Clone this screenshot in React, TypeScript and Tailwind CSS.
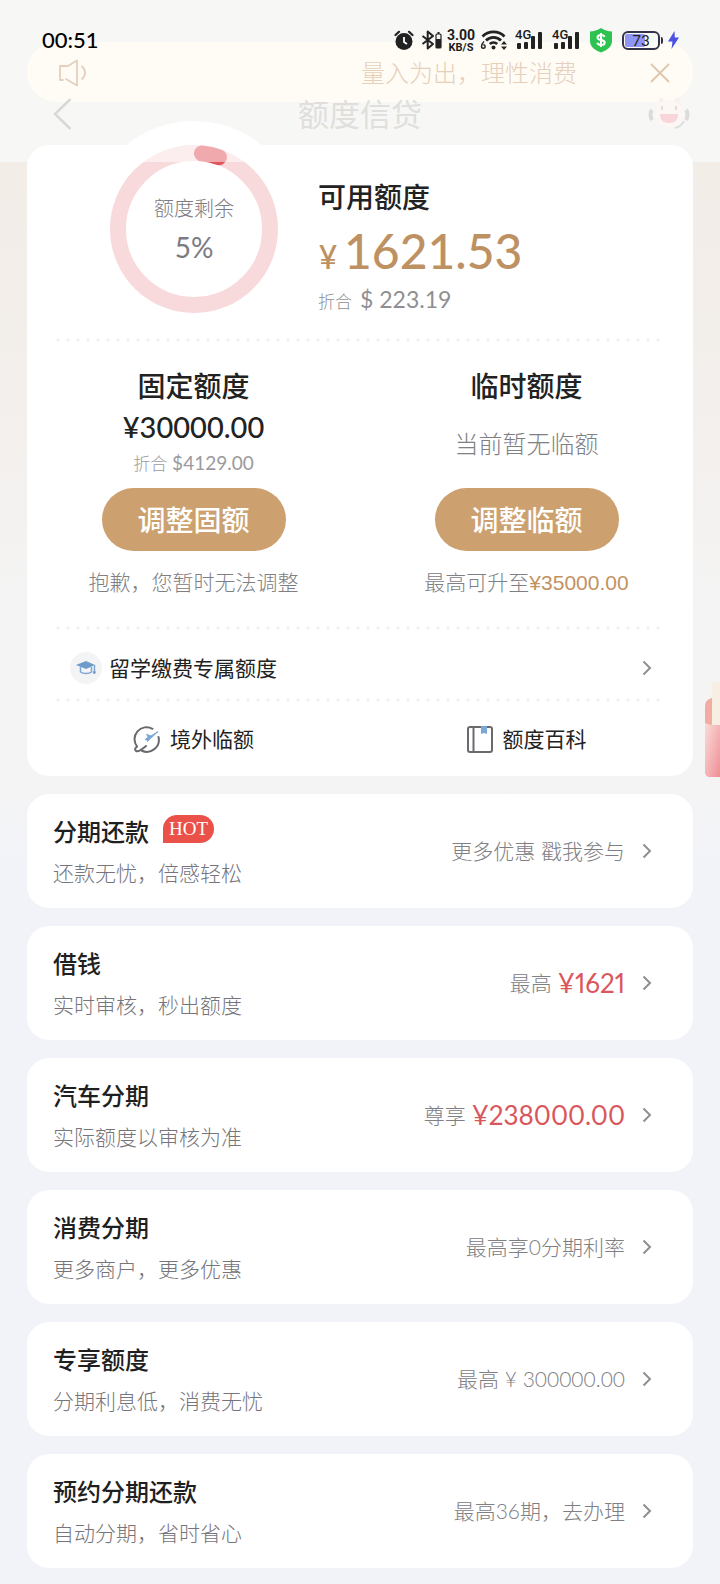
import type { ReactNode } from "react";

type Offer = {
  title: string;
  desc: string;
  note: string;
  amount?: string;
  hot?: boolean;
};

const offers: Offer[] = [
  { title: "分期还款", desc: "还款无忧，倍感轻松", note: "更多优惠 戳我参与", hot: true },
  { title: "借钱", desc: "实时审核，秒出额度", note: "最高", amount: "¥1621" },
  { title: "汽车分期", desc: "实际额度以审核为准", note: "尊享", amount: "¥238000.00" },
  { title: "消费分期", desc: "更多商户，更多优惠", note: "最高享0分期利率" },
  { title: "专享额度", desc: "分期利息低，消费无忧", note: "最高 ¥ 300000.00" },
  { title: "预约分期还款", desc: "自动分期，省时省心", note: "最高36期，去办理" },
];

function Chevron() {
  return (
    <svg width="10" height="16" viewBox="0 0 10 16" fill="none" stroke="#8f8f93" strokeWidth="2">
      <path d="M1.500 1.500 8 8l-6.500 6.500" />
    </svg>
  );
}

function Divider() {
  return (
    <div className="mx-[26px] h-1 bg-[radial-gradient(circle,#eff0f2_1px,transparent_2px)] bg-[length:10px_4px]" />
  );
}

function Signal() {
  return (
    <div className="relative h-5 w-7">
      <span className="absolute left-0 -top-0.5 font-['Roboto',sans-serif] text-[13px] leading-[13px] font-medium">4G</span>
      <svg className="h-5 w-7" viewBox="0 0 28 20" fill="#222">
        <rect x="2" y="13" width="4" height="6" rx="1" />
        <rect x="9" y="12" width="4" height="7" rx="1" />
        <rect x="16" y="6" width="4" height="13" rx="1" />
        <rect x="23" y="2" width="4" height="17" rx="1" />
      </svg>
    </div>
  );
}

function StatusBar() {
  return (
    <div className="absolute inset-x-0 top-[26px] flex h-7 items-center pl-[42px] pr-10 text-[#1c1c1c]">
      <span className="text-[22px] leading-7 font-medium text-black">00:51</span>
      <div className="ml-auto flex items-center">
        <svg width="20" height="20" viewBox="0 0 20 20" fill="none">
          <circle cx="10" cy="11.500" r="8.500" fill="#222" />
          <path d="M10 7v5l3 2" stroke="#fff" strokeWidth="1.800" />
          <path d="M1.500 5 5 1.800M18.500 5 15 1.800" stroke="#222" strokeWidth="2.200" strokeLinecap="round" />
        </svg>
        <svg className="ml-[7px]" width="21" height="20" viewBox="0 0 21 20" fill="none">
          <path d="M1.500 6 12 14l-5.300 4.500v-17L12 6 1.500 14" stroke="#222" strokeWidth="2" strokeLinejoin="round" />
          <rect x="15" y="4" width="5" height="14" rx="1" stroke="#222" strokeWidth="1.200" />
          <path d="M15 9h5v9h-5zM16.500 2h2v2h-2z" fill="#222" />
        </svg>
        <div className="ml-1 w-[30px] text-center font-['Roboto',sans-serif] font-bold">
          <div className="text-[14px] leading-[14px]">3.00</div>
          <div className="text-[11px] leading-[11px]">KB/S</div>
        </div>
        <svg className="ml-1" width="28" height="22" viewBox="0 0 28 22" fill="none">
          <path d="M2.500 7.500a15.500 15.500 0 0 1 22 0M6 11.500a10.500 10.500 0 0 1 15 0M9.800 15a5.500 5.500 0 0 1 7.400 0" stroke="#222" strokeWidth="2.800" />
          <circle cx="13.500" cy="18.500" r="2" fill="#222" />
          <path d="M21 15.500 24 12l3 3.500zM21 17.500l3 3.500 3-3.500z" fill="#222" />
          <path d="M4 12.500c-2 2-2.500 3.500-2.500 5a1.800 1.800 0 1 0 1.800-1.800" stroke="#222" strokeWidth="1.400" />
        </svg>
        <div className="ml-[7px]">
          <Signal />
        </div>
        <div className="ml-[9px]">
          <Signal />
        </div>
        <svg className="ml-[9px]" width="24" height="26" viewBox="0 0 24 26" fill="none">
          <path d="M12 1c3.500 2.300 7 3.300 11 3.500v9.500c0 5.500-4.500 9.300-11 11.500C5.500 23.300 1 19.500 1 14V4.500C5 4.300 8.500 3.300 12 1z" fill="#2ec351" />
          <path d="M15.500 10c-.5-1.500-1.800-2-3.500-2-2 0-3.500.8-3.500 2.500 0 3.500 7.200 1.700 7.200 5 0 1.700-1.700 2.500-3.700 2.500-1.900 0-3.300-.7-3.700-2.200M12 6v14" stroke="#fff" strokeWidth="2" />
        </svg>
        <div className="relative ml-[9px] h-[19px] w-[38px] rounded-[6px] border-2 border-[#33334a] p-px">
          <div className="h-full w-5 rounded-[2px] bg-[#8f95f5]" />
          <span className="absolute inset-0 text-center text-[15px] leading-[15px] text-[#222]">73</span>
        </div>
        <div className="ml-px h-[7px] w-[2px] rounded-r bg-[#33334a]" />
        <svg className="ml-1" width="13" height="20" viewBox="0 0 13 20">
          <path d="M7.500 1 1 11.500h4.500L4.500 19 12 7.500H7.800z" fill="#4b50e6" />
        </svg>
      </div>
    </div>
  );
}

function Header() {
  return (
    <header className="relative z-20 h-[145px] pt-[42px]">
      <div className="mx-[27px] flex h-[60px] items-center rounded-full bg-[#fffcf5] pt-0.5 pl-[31px] pr-[18px] text-[#e6d0bb]">
        <svg width="30" height="28" viewBox="0 0 30 28" fill="none" stroke="currentColor" strokeWidth="1.800" strokeLinejoin="round" strokeLinecap="round">
          <path d="M5 21H2V7h8l9-5.500v25L8 20" />
          <path d="M24 7.500c4 3.500 4 9 0 12.500" />
        </svg>
        <p className="ml-auto text-2xl leading-8 font-light whitespace-nowrap">量入为出，理性消费</p>
        <button aria-label="关闭" className="ml-[68px] p-1">
          <svg width="22" height="22" viewBox="0 0 22 22" stroke="#e0c7af" strokeWidth="2">
            <path d="m2 2 18 18M20 2 2 20" />
          </svg>
        </button>
      </div>
      <nav className="flex items-start justify-between pl-[53px] pr-[30px] text-[#e0dfdd]">
        <button aria-label="返回" className="-mt-1">
          <svg width="19" height="32" viewBox="0 0 19 32" fill="none" stroke="#d9d8d6" strokeWidth="2.500">
            <path d="M17.500 1 2 16l15.500 15" />
          </svg>
        </button>
        <h1 className="text-[31px] leading-6">额度信贷</h1>
        <button aria-label="客服" className="-mt-1.5">
          <svg width="42" height="34" viewBox="0 0 42 34" fill="none">
            <path d="M10 9 12 1l6 4h7l5-4 3 8" fill="#fbeeed" />
            <ellipse cx="21" cy="18" rx="15" ry="14" fill="#fcf6f5" />
            <path d="M4 14c-2 2-2 7 0 10" stroke="#dadcdc" strokeWidth="4" />
            <path d="M38 14c2 2 2 7 0 10" stroke="#dadcdc" strokeWidth="4" />
            <path d="M36 25c-2 4-5 6-9 7" stroke="#dedede" strokeWidth="2" />
            <path d="M12 18h18c0 6-3 9-9 9s-9-3-9-9z" fill="#f7d5d8" />
            <path d="M14 10v4M28 10v4" stroke="#ead9d9" strokeWidth="2" />
          </svg>
        </button>
      </nav>
      <StatusBar />
    </header>
  );
}

function QuotaRing() {
  return (
    <div className="relative h-[168px] w-[168px] shrink-0">
      <div className="absolute -inset-6 rounded-full bg-white" />
      <svg className="absolute inset-0" width="168" height="168" viewBox="0 0 168 168" fill="none" strokeWidth="16">
        <circle cx="84" cy="84" r="76" stroke="#f9dadc" />
        <path d="M92 8.400A76 76 0 0 1 109 12.200" stroke="#e0555a" strokeLinecap="round" />
      </svg>
      <div className="relative flex flex-col items-center pt-[47px] text-[#7b7b82]">
        <span className="text-xl leading-8 font-light">额度剩余</span>
        <span className="text-[28px] leading-[46px]">5%</span>
      </div>
    </div>
  );
}

function QuotaColumn({ title, action, children, hint }: { title: string; action: string; children: ReactNode; hint: ReactNode }) {
  return (
    <div className="flex flex-col items-center">
      <h2 className="text-[28px] leading-10 font-medium">{title}</h2>
      <div className="flex h-[82px] flex-col items-center">{children}</div>
      <button className="h-[63px] w-[184px] rounded-full bg-[#cca16f] text-[28px] leading-10 font-medium text-white">
        {action}
      </button>
      <p className="mt-4 text-[21px] leading-[30px] font-light text-[#808084]">{hint}</p>
    </div>
  );
}

function QuotaCard() {
  return (
    <section className="mx-[27px] rounded-[22px] bg-white text-[#222]">
      <div className="flex h-[193px] pl-[83px]">
        <QuotaRing />
        <div className="relative pl-10 pt-8">
          <h2 className="text-[28px] leading-10 font-medium">可用额度</h2>
          <p className="mt-1 flex items-baseline gap-1.5 font-medium text-[#be9163]">
            <span className="w-5 text-center text-[32px]">¥</span>
            <span className="text-5xl leading-[60px]">1621.53</span>
          </p>
          <p className="flex items-baseline gap-2 text-[#8f8f93]">
            <span className="text-[17px] font-light">折合</span>
            <span className="text-[23px] leading-9">$ 223.19</span>
          </p>
        </div>
      </div>
      <Divider />
      <div className="grid grid-cols-2 pt-6 pb-7">
        <QuotaColumn title="固定额度" action="调整固额" hint="抱歉，您暂时无法调整">
          <p className="text-[29px] leading-[42px] font-medium">¥30000.00</p>
          <p className="text-[19px] leading-[30px] text-[#9a9a9e]">
            <span className="text-[17px] font-light">折合</span> $4129.00
          </p>
        </QuotaColumn>
        <QuotaColumn
          title="临时额度"
          action="调整临额"
          hint={
            <>
              最高可升至
              <span className="font-['Liberation_Sans',Arial,sans-serif] text-[#c4925f]">¥35000.00</span>
            </>
          }
        >
          <p className="pt-5 text-2xl leading-9 font-light text-[#808084]">当前暂无临额</p>
        </QuotaColumn>
      </div>
      <Divider />
      <button className="flex h-[68px] w-full items-center pt-2 pl-[43px] pr-[41px]">
        <span className="flex h-8 w-8 items-center justify-center rounded-full bg-[#f3f4f6]">
          <svg width="20" height="14" viewBox="0 0 20 14" fill="none">
            <path d="M10 0 0 4l10 4 9-4z" fill="#6f9bcc" />
            <path d="M4.500 6v5c2.500 2 8.500 2 11 0V6M18.500 4v7" stroke="#7fa6d3" strokeWidth="1.500" />
            <circle cx="18.300" cy="11.500" r="1.400" fill="#6f9bcc" />
          </svg>
        </span>
        <span className="ml-[7px] mr-auto text-[21px] leading-[30px]">留学缴费专属额度</span>
        <Chevron />
      </button>
      <Divider />
      <div className="grid h-[74px] grid-cols-2">
        <button className="flex items-center justify-center gap-2.5">
          <svg width="27" height="27" viewBox="0 0 27 27" fill="none" strokeLinecap="round">
            <path d="M19.500 2.800A12 12 0 0 0 4 20.500M25.500 11a12 12 0 0 1-17 13.500" stroke="#6a6a6e" strokeWidth="2" />
            <path d="M4 20.500c-2 1.500-2.500 3.500-1 4.500 2 1 6-1.500 10-5" stroke="#6a6a6e" strokeWidth="2" />
            <path d="m14 8.500 4 1.500 7-4.500-7.500 7-3 3-.5-2h-2l3-2z" fill="#7ba7d6" stroke="#7ba7d6" />
          </svg>
          <span className="text-[21px] leading-[30px]">境外临额</span>
        </button>
        <button className="flex items-center justify-center gap-2.5">
          <svg width="26" height="27" viewBox="0 0 26 27" fill="none">
            <rect x="1" y="1" width="24" height="25" rx="2" stroke="#6a6a6e" strokeWidth="2" />
            <path d="M6.500 1v25" stroke="#6a6a6e" strokeWidth="2" />
            <path d="M14 0h6v8l-3-1-3 1z" fill="#7ba7d6" />
          </svg>
          <span className="text-[21px] leading-[30px]">额度百科</span>
        </button>
      </div>
    </section>
  );
}

function OfferCard({ offer }: { offer: Offer }) {
  return (
    <button className="flex h-[114px] w-full items-center rounded-[22px] bg-white pl-[26px] pr-[41px] text-left">
      <span className="block pt-1">
        <span className="flex items-center text-2xl leading-10 font-medium text-[#1f1f1f]">
          {offer.title}
          {offer.hot && (
            <span className="mb-1.5 ml-3.5 flex h-7 w-[51px] items-center justify-center rounded-[14px] rounded-bl-none bg-[#ea5149] font-['Liberation_Serif',serif] text-[19px] text-white">
              HOT
            </span>
          )}
        </span>
        <span className="block text-[21px] leading-[42px] font-light text-[#75757b]">{offer.desc}</span>
      </span>
      <span className="ml-auto mr-[17px] flex items-center gap-1.5 text-[21px] leading-8 font-light text-[#808084]">
        {offer.note}
        {offer.amount && (
          <span className="text-[26px] font-normal text-[#d9575c] proportional-nums">{offer.amount}</span>
        )}
      </span>
      <Chevron />
    </button>
  );
}

export default function App() {
  return (
    <div className="relative min-h-screen overflow-hidden bg-[#f2f3f8] bg-[linear-gradient(#efeeea_0px,#efeeea_162px,#f2ede7_162px,#f3efec_400px,#f4f4f4_620px,#f4f4f4_780px,#f2f3f8_860px)] pb-[17px] font-['Lato','Noto_Sans_CJK_SC',sans-serif]">
      <div className="pointer-events-none absolute inset-x-0 top-0 z-10 h-[162px] bg-white/50" />
      <Header />
      <main>
        <QuotaCard />
        <div className="mx-[27px] mt-[18px] flex flex-col gap-[18px]">
          {offers.map((o) => (
            <OfferCard key={o.title} offer={o} />
          ))}
        </div>
      </main>
      {/* red packet peeking in from the right edge */}
      <svg className="absolute right-0 top-[682px]" width="16" height="95" viewBox="0 0 16 95">
        <defs>
          <linearGradient id="packet" x1="0" y1="0" x2="1" y2="1">
            <stop offset="0" stopColor="#fbdcd8" />
            <stop offset="1" stopColor="#ef8f96" />
          </linearGradient>
        </defs>
        <path d="M1 25c0-5 2-8 7-9v35H1z" fill="#f3aca4" />
        <rect x="8" y="0" width="8" height="50" fill="#f7efe3" />
        <path d="M1 41c5 2 9 2 15 2v52H6c-3 0-5-2-5-5z" fill="url(#packet)" />
      </svg>
    </div>
  );
}
